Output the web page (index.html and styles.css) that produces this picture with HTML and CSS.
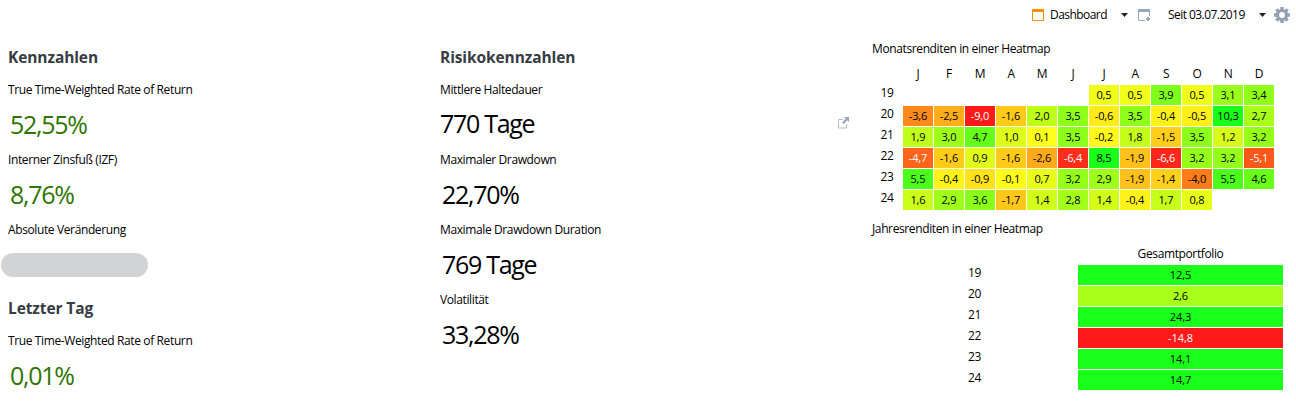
FILE: index.html
```
<!DOCTYPE html>
<html lang="de">
<head>
<meta charset="utf-8">
<title>Dashboard</title>
<link rel="stylesheet" href="styles.css">
</head>
<body>
<header class="toolbar">
  <svg class="icon-board" width="12" height="12" viewBox="0 0 12 12"><path d="M.5 1v10.500h11V1" fill="none" stroke="#f39200"/><path d="M0 0h12v3H0z" fill="#f39200"/></svg>
  <span class="board-name">Dashboard</span>
  <svg class="caret" width="7" height="4" viewBox="0 0 7 4"><path d="M0 0h7L3.500 4z" fill="#222"/></svg>
  <svg class="icon-new" width="13" height="13" viewBox="0 0 13 13"><path d="M.5 1v10.500H7M11.500 1v6" fill="none" stroke="#9aa7b8"/><path d="M0 0h12v3H0z" fill="#9aa7b8"/><path d="M10 8v4M8 10h4" stroke="#9aa7b8" stroke-width="2"/></svg>
  <span class="period">Seit 03.07.2019</span>
  <svg class="caret" width="7" height="4" viewBox="0 0 7 4"><path d="M0 0h7L3.500 4z" fill="#222"/></svg>
  <svg class="icon-gear" width="16" height="16" viewBox="0 0 16 16"><g fill="none" stroke="#93a1b3"><circle cx="8" cy="8" r="4.500" stroke-width="3.200"/><path stroke-width="3.400" d="M8 0v3M8 13v3M0 8h3M13 8h3M2.400 2.400l2 2M11.600 11.600l2 2M2.400 13.600l2-2M11.600 4.400l2-2"/></g></svg>
</header>
<main class="board">
  <section class="column">
    <h2 class="title">Kennzahlen</h2>
    <div class="label">True Time-Weighted Rate of Return</div>
    <div class="value gain">52,55%</div>
    <div class="label">Interner Zinsfuß (IZF)</div>
    <div class="value gain">8,76%</div>
    <div class="label">Absolute Veränderung</div>
    <div class="masked"><div class="pill"></div></div>
    <h2 class="title">Letzter Tag</h2>
    <div class="label">True Time-Weighted Rate of Return</div>
    <div class="value gain">0,01%</div>
  </section>
  <section class="column">
    <h2 class="title">Risikokennzahlen</h2>
    <div class="label">Mittlere Haltedauer</div>
    <div class="row">
      <div class="value first">770 Tage</div>
      <svg class="icon-open" width="13" height="12" viewBox="0 0 13 12"><path d="M6 2.500H1.500v8.500h8V7" fill="none" stroke="#b6c0cb"/><path d="M7 0h5v5l-1.700-1.700L6.500 7 5 5.500l3.700-3.800z" fill="#9aa7b8"/></svg>
    </div>
    <div class="label">Maximaler Drawdown</div>
    <div class="value">22,70%</div>
    <div class="label">Maximale Drawdown Duration</div>
    <div class="value">769 Tage</div>
    <div class="label">Volatilität</div>
    <div class="value">33,28%</div>
  </section>
  <section class="maps">
    <div class="map-title">Monatsrenditen in einer Heatmap</div>
    <div class="months" id="months"></div>
    <div class="map-title yearly">Jahresrenditen in einer Heatmap</div>
    <div class="years" id="years"></div>
  </section>
</main>
<script src="heatmap.js"></script>
</body>
</html>
```
FILE: styles.css
```
* { box-sizing: border-box; }
body {
  margin: 0;
  width: 1296px;
  height: 401px;
  overflow: hidden;
  background: #fff;
  color: #000;
  font: 12px/20px "Open Sans", "Noto Sans", sans-serif;
  letter-spacing: -0.38px;
}
.toolbar {
  display: flex;
  align-items: center;
  justify-content: flex-end;
  height: 30px;
  padding-right: 6px;
}
.board-name { width: 57px; margin: 0 14px 0 6px; white-space: nowrap; letter-spacing: -0.55px; }
.icon-new { margin-left: 10px; }
.period { width: 77px; margin: 0 14px 0 17px; white-space: nowrap; letter-spacing: -0.55px; }
.icon-gear { margin-left: 8px; }
.board { display: grid; grid-template-columns: 432px 432px 432px; }
.column { padding: 7px 0 0 8px; }
.title {
  height: 40px;
  margin: 0 0 1px;
  font-size: 15.5px;
  line-height: 40px;
  font-weight: 700;
  letter-spacing: -0.1px;
  color: #363c42;
}
.label { height: 24px; line-height: 24px; }
.value {
  height: 46px;
  padding-left: 2px;
  font-size: 25px;
  line-height: 44px;
  letter-spacing: -1.3px;
}
.first { padding-left: 0; line-height: 43px; }
.gain { color: #2f7500; }
.masked { height: 46px; padding-top: 11px; }
.pill { width: 147px; height: 24px; margin-left: -7px; border-radius: 12px; background: #d1d3d4; }
.row { display: flex; justify-content: space-between; align-items: flex-start; padding-right: 14px; }
.icon-open { margin-top: 15px; }
.maps { padding-left: 8px; }
.map-title { height: 20px; margin-top: 9px; }
.months {
  display: grid;
  grid-template-columns: 30px repeat(12, 30px);
  grid-template-rows: 25px repeat(6, 20px);
  gap: 1px;
  text-align: center;
}
.yearly { margin-top: 9px; }
.years {
  display: grid;
  grid-template-columns: 205px 205px;
  grid-template-rows: 25px repeat(6, 20px);
  gap: 1px;
  text-align: center;
}
.head { line-height: 30px; }
.year { line-height: 15px; }
.cell { font-size: 11px; letter-spacing: -0.1px; }
.loss { color: #fff; }
```
FILE: heatmap.js
```
const months = {
  19: [null, null, null, null, null, null, 0.5, 0.5, 3.9, 0.5, 3.1, 3.4],
  20: [-3.6, -2.5, -9.0, -1.6, 2.0, 3.5, -0.6, 3.5, -0.4, -0.5, 10.3, 2.7],
  21: [1.9, 3.0, 4.7, 1.0, 0.1, 3.5, -0.2, 1.8, -1.5, 3.5, 1.2, 3.2],
  22: [-4.7, -1.6, 0.9, -1.6, -2.6, -6.4, 8.5, -1.9, -6.6, 3.2, 3.2, -5.1],
  23: [5.5, -0.4, -0.9, -0.1, 0.7, 3.2, 2.9, -1.9, -1.4, -4.0, 5.5, 4.6],
  24: [1.6, 2.9, 3.6, -1.7, 1.4, 2.8, 1.4, -0.4, 1.7, 0.8, null, null]
};
const years = { 19: [12.5], 20: [2.6], 21: [24.3], 22: [-14.8], 23: [14.1], 24: [14.7] };

// Yellow at zero, fading to green or red at seven percent.
function shade(v) {
  const c = Math.round(26 + 229 * (1 - Math.min(Math.abs(v) / 7, 1)));
  return v < 0 ? `rgb(255,${c},26)` : `rgb(${c},255,26)`;
}

function add(parent, cls, text) {
  const el = document.createElement('div');
  el.className = cls;
  el.textContent = text;
  parent.append(el);
  return el;
}

function fill(id, heads, data) {
  const root = document.getElementById(id);
  add(root, 'head', '');
  heads.forEach(h => add(root, 'head', h));
  for (const [year, values] of Object.entries(data)) {
    add(root, 'year', year);
    values.forEach(v => {
      if (v === null) { add(root, 'blank', ''); return; }
      const cell = add(root, v < -4.5 ? 'cell loss' : 'cell', v.toFixed(1).replace('.', ','));
      cell.style.backgroundColor = shade(v);
    });
  }
}

fill('months', [...'JFMAMJJASOND'], months);
fill('years', ['Gesamtportfolio'], years);
```
